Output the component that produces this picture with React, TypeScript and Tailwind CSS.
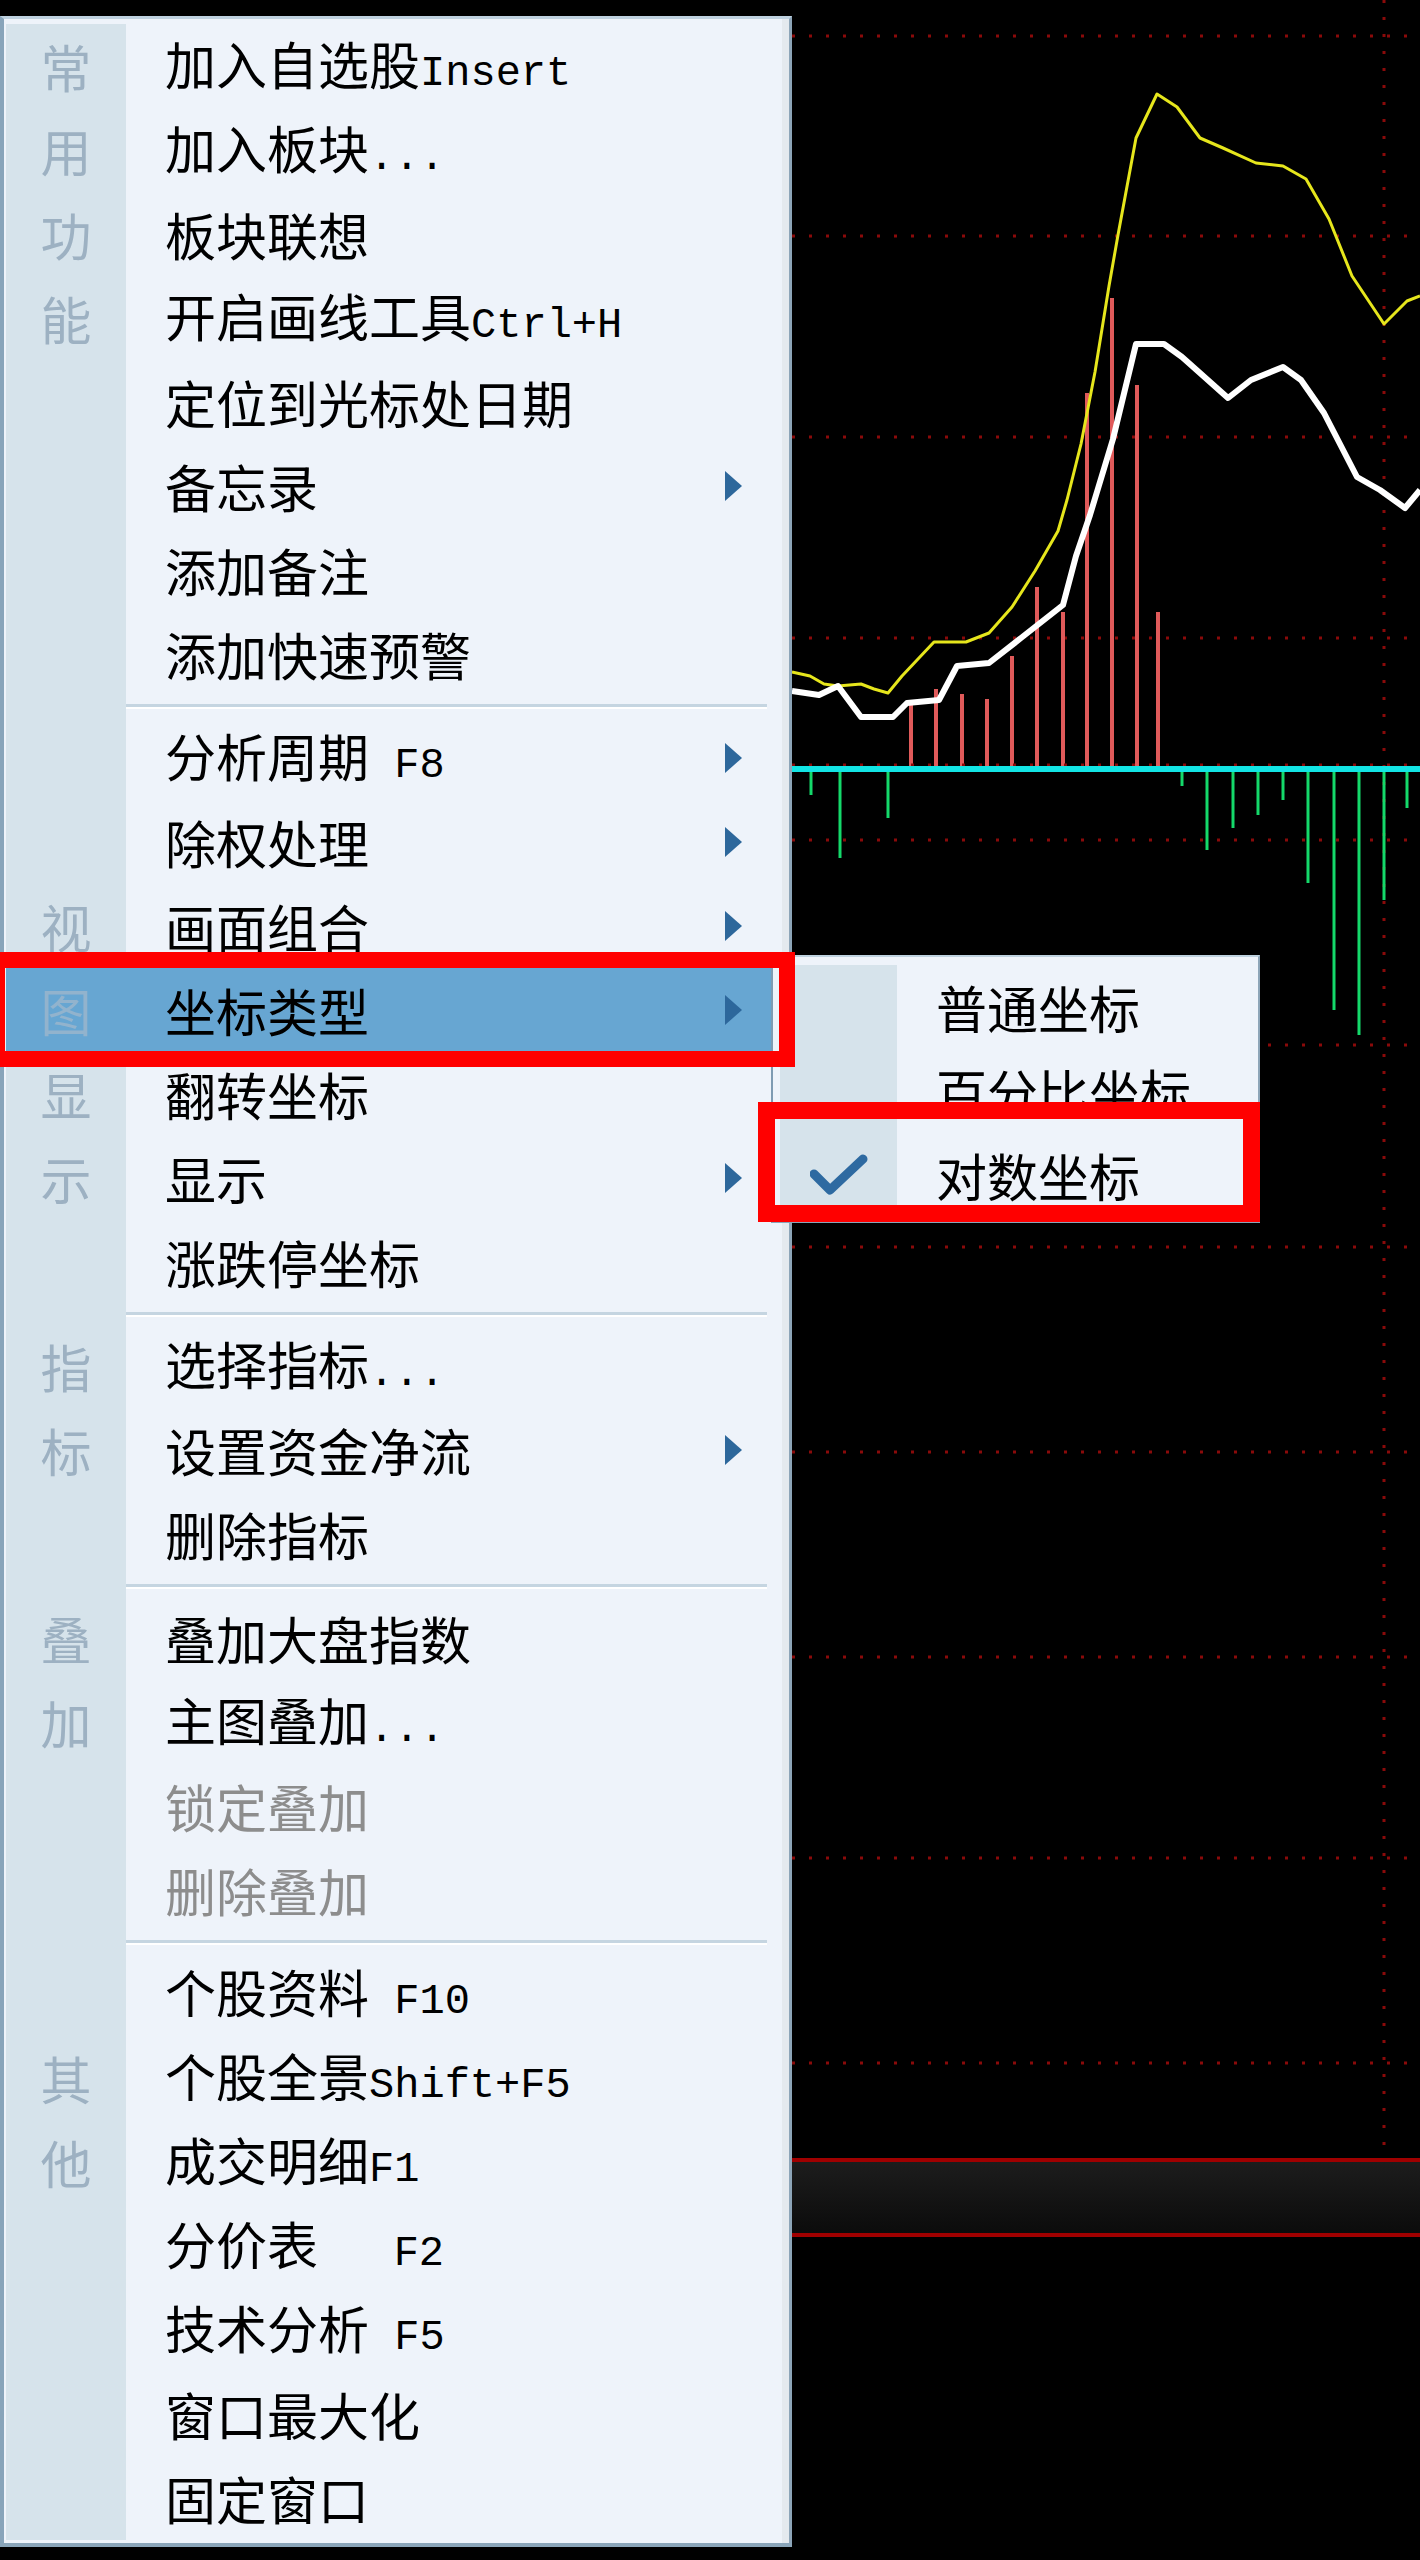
import React from 'react';
import clsx from 'clsx';

type MenuEntry =
  | { kind: 'sep' }
  | {
      kind: 'item';
      text: string;
      label?: string;
      arrow?: boolean;
      disabled?: boolean;
      active?: boolean;
    };

const sep: MenuEntry = { kind: 'sep' };
const item = (
  text: string,
  opts: { label?: string; arrow?: boolean; disabled?: boolean; active?: boolean } = {}
): MenuEntry => ({ kind: 'item', text, ...opts });

const menuItems: MenuEntry[] = [
  item('加入自选股Insert', { label: '常' }),
  item('加入板块...', { label: '用' }),
  item('板块联想', { label: '功' }),
  item('开启画线工具Ctrl+H', { label: '能' }),
  item('定位到光标处日期'),
  item('备忘录', { arrow: true }),
  item('添加备注'),
  item('添加快速预警'),
  sep,
  item('分析周期 F8', { arrow: true }),
  item('除权处理', { arrow: true }),
  item('画面组合', { label: '视', arrow: true }),
  item('坐标类型', { label: '图', arrow: true, active: true }),
  item('翻转坐标', { label: '显' }),
  item('显示', { label: '示', arrow: true }),
  item('涨跌停坐标'),
  sep,
  item('选择指标...', { label: '指' }),
  item('设置资金净流', { label: '标', arrow: true }),
  item('删除指标'),
  sep,
  item('叠加大盘指数', { label: '叠' }),
  item('主图叠加...', { label: '加' }),
  item('锁定叠加', { disabled: true }),
  item('删除叠加', { disabled: true }),
  sep,
  item('个股资料 F10'),
  item('个股全景Shift+F5', { label: '其' }),
  item('成交明细F1', { label: '他' }),
  item('分价表   F2'),
  item('技术分析 F5'),
  item('窗口最大化'),
  item('固定窗口'),
];

// ascii runs are drawn half width, like the bitmap font in the terminal
const MenuText = ({ text }: { text: string }) => {
  const parts = text.split(/([\x20-\x7e]+)/).filter(Boolean);
  return (
    <>
      {parts.map((p, i) =>
        /^[\x20-\x7e]+$/.test(p) ? (
          <span key={i} className="font-['Liberation_Mono','Noto_Sans_CJK_SC',monospace] text-[42px] whitespace-pre">
            {p}
          </span>
        ) : (
          <span key={i}>{p}</span>
        )
      )}
    </>
  );
};

const Arrow = () => (
  <svg width="17" height="30" viewBox="0 0 17 30" className="mr-[40px] shrink-0">
    <path d="M0 0 L17 15 L0 30 Z" fill="#2d679b" />
  </svg>
);

const Check = () => (
  <svg width="58" height="42" viewBox="0 0 58 42">
    <path d="M4 20 L20 36 L53 5" fill="none" stroke="#2e6aa1" strokeWidth="9" strokeLinejoin="round" strokeLinecap="round" />
  </svg>
);

const ContextMenu = () => (
  <div className="absolute left-0 top-[16px] w-[792px] border-l-[4px] border-t-[3px] border-r-[3px] border-b-[4px] border-l-[#88a4ba] border-t-[#bed1df] border-r-[#8da5b8] border-b-[#8aa5b9] bg-[#eef3fa] pl-[2px] pr-[7px] pt-[5px] pb-[3px] shadow-[inset_-7px_0_0_#e4e9ee]">
    {menuItems.map((m, idx) => {
      if (m.kind === 'sep') {
        return (
          <div key={idx} className="flex h-[20px]">
            <div className="w-[120px] shrink-0 bg-[#d6e3eb]" />
            <div className="mr-[15px] flex-1 pt-[8px]">
              <div className="h-[3px] bg-[#c5d5e1]" />
              <div className="h-[2px] bg-white" />
            </div>
          </div>
        );
      }
      return (
        <div key={idx} className={clsx('flex h-[84px] items-center', m.active && 'bg-[#67a6d2]')}>
          <div
            className={clsx(
              'flex h-full w-[120px] shrink-0 items-center justify-center',
              m.active ? 'text-[#92b3cd]' : 'bg-[#d6e3eb] text-[#9db1c2]'
            )}
          >
            {m.label}
          </div>
          <div className={clsx('flex-1 pl-[39px] whitespace-pre', m.disabled ? 'text-[#8d8d8d]' : 'text-black')}>
            <MenuText text={m.text} />
          </div>
          {m.arrow && <Arrow />}
        </div>
      );
    })}
  </div>
);

const subItems = [
  { text: '普通坐标', checked: false },
  { text: '百分比坐标', checked: false },
  { text: '对数坐标', checked: true },
];

const SubMenu = () => (
  <div className="absolute left-[771px] top-[955px] w-[489px] border-l-2 border-t-2 border-r-2 border-b-2 border-l-[#7f9bb2] border-t-[#bed1df] border-r-[#8da5b8] border-b-[#8aa5b9] bg-[#eef3fa] pl-[7px] pr-[8px] pt-[8px] pb-[4px]">
    {subItems.map((s) => (
      <div key={s.text} className="flex h-[84px] items-center">
        <div className="flex h-full w-[117px] shrink-0 items-center justify-center bg-[#d6e3eb]">
          {s.checked && <Check />}
        </div>
        <div className="flex-1 pl-[39px] text-black">{s.text}</div>
      </div>
    ))}
  </div>
);

const hLines = [36, 236, 437, 638, 840, 1045, 1247, 1452, 1657, 1858, 2063];

const yellowPts =
  '792,672 810,676 824,684 838,686 861,684 874,689 888,693 902,676 934,642 966,642 989,633 1012,607 1035,571 1058,531 1067,500 1081,444 1095,372 1109,286 1118,235 1136,138 1157,94 1177,107 1200,138 1223,148 1256,163 1283,166 1306,179 1329,219 1352,276 1384,324 1407,301 1420,296';
const whitePts =
  '792,691 819,695 838,686 861,717 893,717 907,703 939,700 957,666 989,663 1021,638 1063,605 1076,556 1090,515 1113,439 1136,344 1164,344 1182,357 1228,398 1251,380 1283,367 1301,380 1324,413 1357,477 1380,490 1405,508 1420,490';

const redBars: [number, number][] = [
  [911, 704], [936, 689], [962, 694], [987, 699], [1012, 656], [1037, 587],
  [1063, 612], [1087, 393], [1112, 298], [1137, 385], [1158, 612],
];
const greenBars: [number, number][] = [
  [811, 795], [840, 858], [888, 818], [1182, 786], [1207, 850], [1233, 828],
  [1258, 815], [1283, 800], [1308, 883], [1334, 1010], [1359, 1035], [1384, 900], [1407, 808],
];

const Chart = () => (
  <svg className="absolute left-0 top-0" width="1420" height="2560" viewBox="0 0 1420 2560">
    <defs>
      <linearGradient id="band" x1="0" y1="0" x2="0" y2="1">
        <stop offset="0" stopColor="#1d1d1d" />
        <stop offset="1" stopColor="#0b0b0b" />
      </linearGradient>
    </defs>
    {hLines.map((y) => (
      <line key={y} x1="792" y1={y} x2="1420" y2={y} stroke="#8a0a0a" strokeWidth="3" strokeDasharray="3 14" />
    ))}
    <line x1="1384" y1="0" x2="1384" y2="2160" stroke="#8a0a0a" strokeWidth="3" strokeDasharray="3 14" />
    {greenBars.map(([x, y]) => (
      <line key={x} x1={x} y1="769" x2={x} y2={y} stroke="#14d96a" strokeWidth="3" />
    ))}
    {redBars.map(([x, y]) => (
      <line key={x} x1={x} y1="769" x2={x} y2={y} stroke="#e05a5a" strokeWidth="4" />
    ))}
    <line x1="792" y1="765" x2="1420" y2="765" stroke="#8a0a0a" strokeWidth="3" strokeDasharray="3 14" />
    <line x1="792" y1="769" x2="1420" y2="769" stroke="#12e4e4" strokeWidth="6" />
    <polyline points={yellowPts} fill="none" stroke="#e6e61c" strokeWidth="3" strokeLinejoin="round" />
    <polyline points={whitePts} fill="none" stroke="#ffffff" strokeWidth="6" strokeLinejoin="round" />
    <rect x="792" y="2161" width="628" height="73" fill="url(#band)" />
    <line x1="792" y1="2160" x2="1420" y2="2160" stroke="#a00000" strokeWidth="4" />
    <line x1="792" y1="2235" x2="1420" y2="2235" stroke="#a00000" strokeWidth="4" />
  </svg>
);

export default function App() {
  return (
    <div className="relative h-[2560px] w-[1420px] overflow-hidden bg-black font-['Noto_Sans_CJK_SC','Noto_Sans',sans-serif] text-[51px] leading-none">
      <Chart />
      <ContextMenu />
      <SubMenu />
      {/* red annotation boxes */}
      <div className="absolute left-[-11px] top-[952px] h-[115px] w-[806px] border-[16px] border-[#ff0000]" />
      <div className="absolute left-[758px] top-[1102px] h-[120px] w-[502px] border-[17px] border-[#ff0000]" />
    </div>
  );
}
